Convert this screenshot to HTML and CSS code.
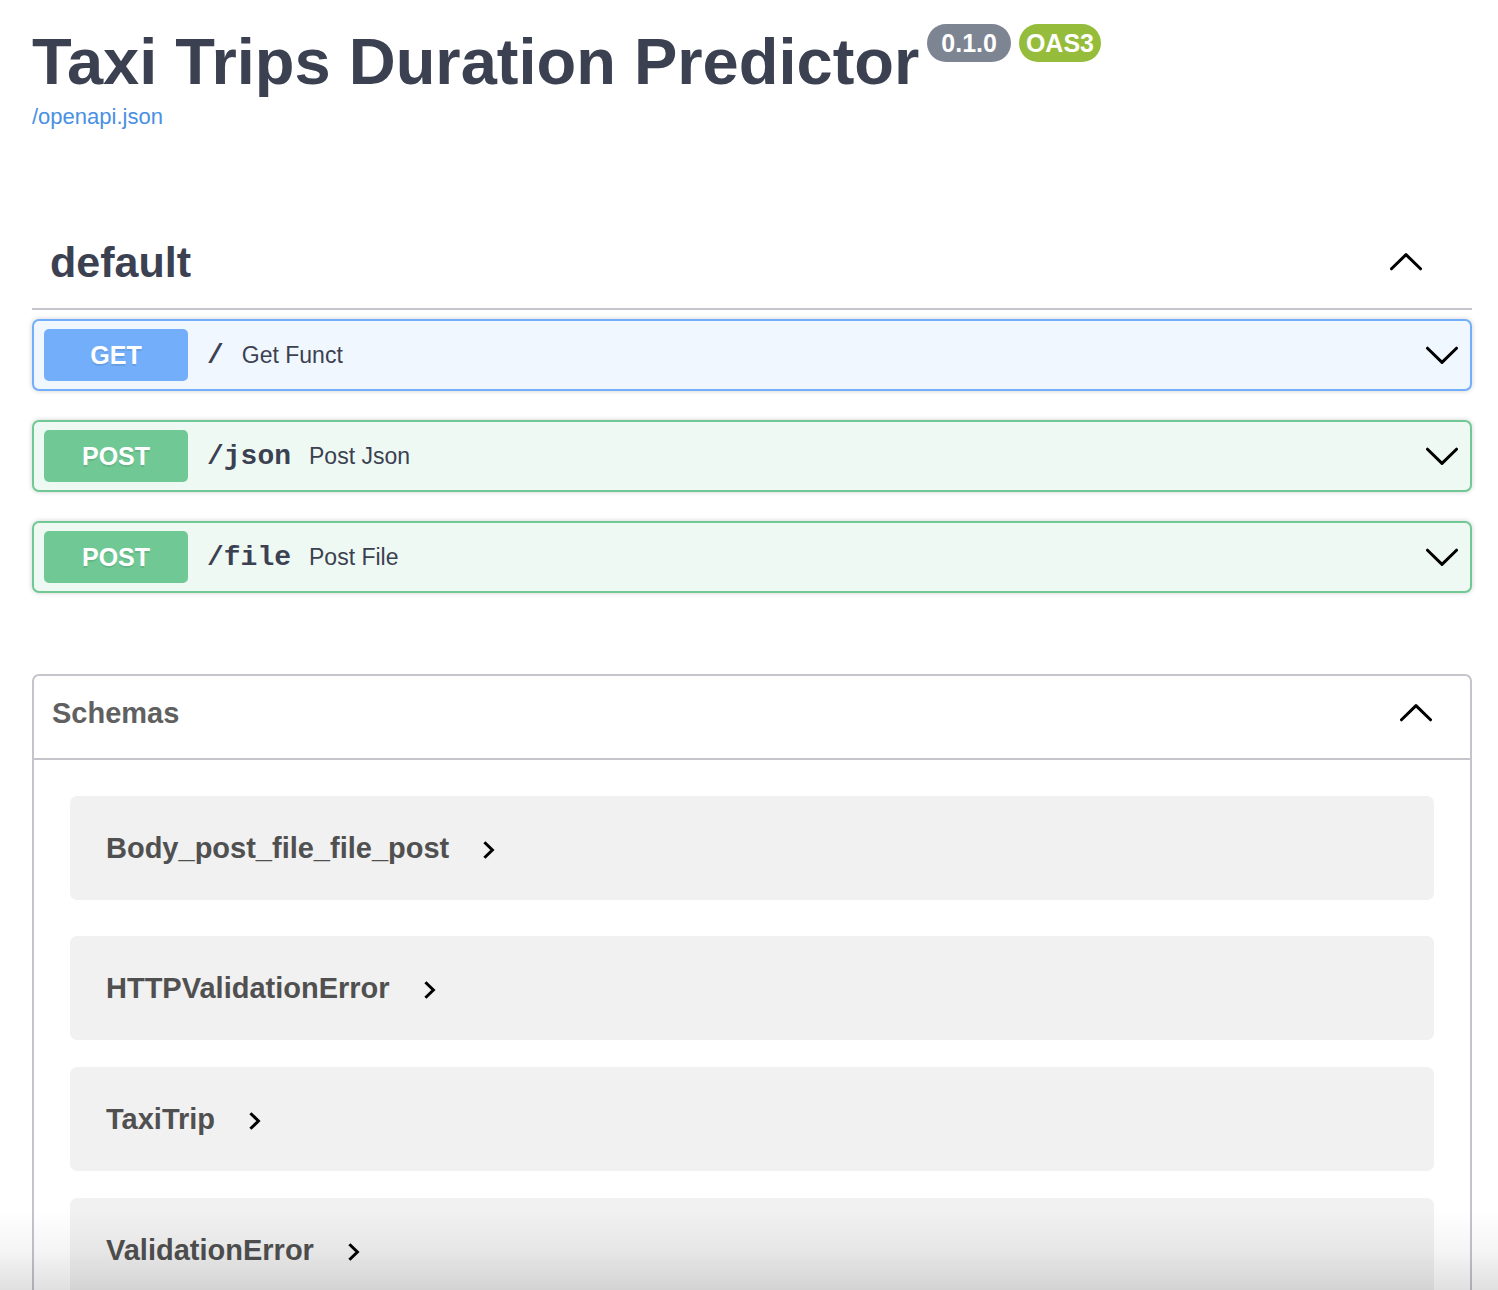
FILE: index.html
```html
<!DOCTYPE html>
<html lang="en">
<head>
<meta charset="utf-8">
<meta name="viewport" content="width=device-width, initial-scale=1">
<title>Taxi Trips Duration Predictor</title>
<link rel="stylesheet" href="styles.css">
</head>
<body>
<svg class="sprite" aria-hidden="true">
  <symbol id="chevron-up" viewBox="0 0 32 18"><path d="M1.5 15.8 16 1.6l14.5 14.2"/></symbol>
  <symbol id="chevron-down" viewBox="0 0 32 18"><path d="M1.5 2.2 16 16.4 30.5 2.2"/></symbol>
  <symbol id="chevron-right" viewBox="0 0 12 18"><path d="M1.4 1.2 9.4 9l-8 7.8"/></symbol>
</svg>
<main class="page">
  <header class="info">
    <div class="title-row">
      <h1 class="title">Taxi Trips Duration Predictor</h1>
      <span class="badge badge-version">0.1.0</span>
      <span class="badge badge-oas">OAS3</span>
    </div>
    <a class="spec-link" href="/openapi.json">/openapi.json</a>
  </header>

  <section class="tag">
    <h2 class="tag-heading">
      <button class="tag-toggle" type="button" aria-expanded="true">
        <span>default</span>
        <svg class="chevron" aria-hidden="true"><use href="#chevron-up"/></svg>
      </button>
    </h2>
    <div class="operations">
      <button class="operation get" type="button" aria-expanded="false">
        <span class="method">GET</span>
        <span class="path">/</span>
        <span class="summary">Get Funct</span>
        <svg class="chevron" aria-hidden="true"><use href="#chevron-down"/></svg>
      </button>
      <button class="operation post" type="button" aria-expanded="false">
        <span class="method">POST</span>
        <span class="path">/json</span>
        <span class="summary">Post Json</span>
        <svg class="chevron" aria-hidden="true"><use href="#chevron-down"/></svg>
      </button>
      <button class="operation post" type="button" aria-expanded="false">
        <span class="method">POST</span>
        <span class="path">/file</span>
        <span class="summary">Post File</span>
        <svg class="chevron" aria-hidden="true"><use href="#chevron-down"/></svg>
      </button>
    </div>
  </section>

  <section class="schemas">
    <h2 class="schemas-heading">
      <button class="schemas-toggle" type="button" aria-expanded="true">
        <span>Schemas</span>
        <svg class="chevron" aria-hidden="true"><use href="#chevron-up"/></svg>
      </button>
    </h2>
    <div class="schema-list">
      <button class="schema" type="button" aria-expanded="false">
        <span>Body_post_file_file_post</span>
        <svg class="caret" aria-hidden="true"><use href="#chevron-right"/></svg>
      </button>
      <button class="schema" type="button" aria-expanded="false">
        <span>HTTPValidationError</span>
        <svg class="caret" aria-hidden="true"><use href="#chevron-right"/></svg>
      </button>
      <button class="schema" type="button" aria-expanded="false">
        <span>TaxiTrip</span>
        <svg class="caret" aria-hidden="true"><use href="#chevron-right"/></svg>
      </button>
      <button class="schema" type="button" aria-expanded="false">
        <span>ValidationError</span>
        <svg class="caret" aria-hidden="true"><use href="#chevron-right"/></svg>
      </button>
    </div>
  </section>
</main>
<div class="bottom-shade"></div>
</body>
</html>
```
FILE: styles.css
```css
* {
  box-sizing: border-box;
}

body {
  margin: 0;
  background: #fff;
  color: #3b4151;
  font-family: "Liberation Sans", Arial, sans-serif;
}

h1,
h2 {
  margin: 0;
}

button {
  margin: 0;
  border: 0;
  background: none;
  color: inherit;
  font: inherit;
  text-align: left;
  cursor: pointer;
}

.sprite {
  display: none;
}

.page {
  height: 100vh;
  padding: 24px 26px 36px 32px;
  overflow-y: auto;
  scrollbar-width: none;
}

/* API title and version */

.title-row {
  display: flex;
  align-items: flex-start;
  gap: 8px;
}

.title {
  font-size: 65px;
  line-height: 76px;
}

.badge {
  flex: none;
  border-radius: 19px;
  color: #fff;
  font-size: 25px;
  font-weight: 700;
  line-height: 38px;
}

.badge-version {
  padding: 0 14px;
  background: #7d8492;
}

.badge-oas {
  padding: 0 7px;
  background: #95bd3b;
}

.spec-link {
  display: block;
  width: fit-content;
  margin-top: 4px;
  color: #4990e2;
  font-size: 22px;
  line-height: 26px;
  text-decoration: none;
}

.chevron {
  flex: none;
  width: 32px;
  height: 18px;
  margin-left: auto;
}

.chevron,
.caret {
  fill: none;
  stroke: #000;
  stroke-width: 3px;
  stroke-linecap: round;
  stroke-linejoin: round;
}

/* Operations */

.tag {
  margin-top: 88px;
}

.tag-toggle {
  display: flex;
  align-items: center;
  width: 100%;
  height: 92px;
  padding: 0 50px 2px 18px;
  border-bottom: 2px solid #c4c4cb;
  font-size: 43px;
  line-height: 50px;
}

.operations {
  display: flex;
  flex-direction: column;
  gap: 29px;
  margin-top: 9px;
}

.operation {
  display: flex;
  align-items: center;
  padding: 8px 12px 8px 10px;
  border: 2px solid;
  border-radius: 7px;
  box-shadow: 0 0 5px rgba(0, 0, 0, 0.19);
}

.get {
  border-color: #73aefa;
  background: #f0f7ff;
}

.post {
  border-color: #70c995;
  background: #eff9f4;
}

.method {
  width: 144px;
  border-radius: 5px;
  color: #fff;
  font-size: 25px;
  font-weight: 700;
  line-height: 52px;
  text-align: center;
  text-shadow: 0 2px 0 rgba(0, 0, 0, 0.1);
}

.get .method {
  background: #73aefa;
}

.post .method {
  background: #70c995;
}

.path {
  padding: 0 18px 0 19px;
  font-family: "Liberation Mono", "Courier New", monospace;
  font-size: 28px;
  font-weight: 700;
}

.summary {
  font-size: 23px;
}

/* Schemas */

.schemas {
  margin-top: 81px;
  border: 2px solid #c4c4cb;
  border-radius: 7px;
}

.schemas-toggle {
  display: flex;
  align-items: center;
  width: 100%;
  height: 84px;
  padding: 0 38px 8px 18px;
  border-bottom: 2px solid #c4c4cb;
  color: #606060;
  font-size: 29px;
  line-height: 34px;
}

.schema-list {
  display: flex;
  flex-direction: column;
  gap: 27px;
  padding: 36px;
}

.schema {
  display: flex;
  align-items: center;
  gap: 34px;
  height: 104px;
  padding: 0 36px;
  border-radius: 7px;
  background: #f1f1f1;
  color: #505050;
  font-size: 29px;
  font-weight: 700;
  line-height: 34px;
}

.schema:first-child {
  margin-bottom: 9px;
}

.caret {
  width: 12px;
  height: 18px;
  margin-top: 4px;
  stroke-linecap: butt;
  stroke-linejoin: miter;
}

/* Shade over the bottom edge of the window */

.bottom-shade {
  position: fixed;
  right: 0;
  bottom: 0;
  left: 0;
  height: 80px;
  background: linear-gradient(rgba(0, 0, 0, 0), rgba(0, 0, 0, 0.04) 50%, rgba(0, 0, 0, 0.12));
  pointer-events: none;
}
```
